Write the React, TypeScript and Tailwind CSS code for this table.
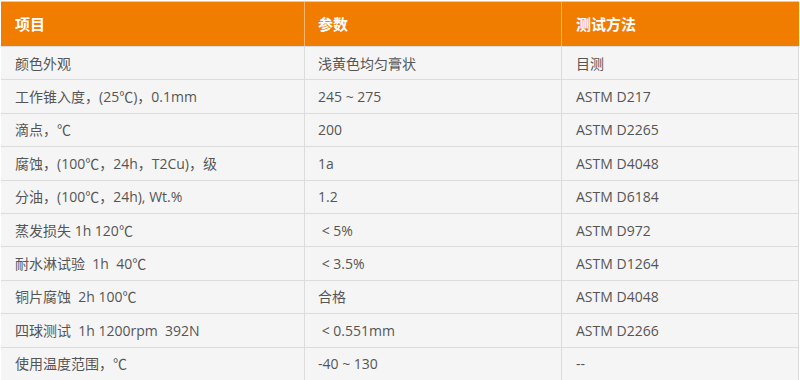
import React from "react";

const rows: [string, string, string][] = [
  ["颜色外观", "浅黄色均匀膏状", "目测"],
  ["工作锥入度，(25℃)，0.1mm", "245 ~ 275", "ASTM D217"],
  ["滴点，℃", "200", "ASTM D2265"],
  ["腐蚀，(100℃，24h，T2Cu)，级", "1a", "ASTM D4048"],
  ["分油，(100℃，24h), Wt.%", "1.2", "ASTM D6184"],
  ["蒸发损失 1h 120℃", " < 5%", "ASTM D972"],
  ["耐水淋试验  1h  40℃", " < 3.5%", "ASTM D1264"],
  ["铜片腐蚀  2h 100℃", "合格", "ASTM D4048"],
  ["四球测试  1h 1200rpm  392N", " < 0.551mm", "ASTM D2266"],
  ["使用温度范围，℃", "-40 ~ 130", "--"],
];

export default function App() {
  return (
    <div
      className="w-[800px] h-[380px] overflow-hidden bg-white pl-px pt-px"
      style={{ fontFamily: '"Open Sans", "Noto Sans CJK SC", sans-serif' }}
    >
      <div className="w-[798px] border-t border-[#e8c9a0]">
        <div className="grid grid-cols-[304px_257px_237px] h-[44px] bg-[#f07c00] text-white font-bold text-[15px]">
          <div className="flex items-center pl-[14px] border-r border-[#f5b56e]">项目</div>
          <div className="flex items-center pl-[13px] border-r border-[#f5b56e]">参数</div>
          <div className="flex items-center pl-[14px]">测试方法</div>
        </div>
        {rows.map((r, i) => (
          <div
            key={i}
            className="grid grid-cols-[304px_257px_237px] h-[33.4px] bg-[#f5f5f5] text-[#555] text-[14px] border-t border-[#dcdcdc] border-r"
          >
            <div className="flex items-center pl-[14px] border-r border-[#dcdcdc] whitespace-pre">{r[0]}</div>
            <div className="flex items-center pl-[13px] border-r border-[#dcdcdc] whitespace-pre">{r[1]}</div>
            <div className="flex items-center pl-[14px] whitespace-pre">{r[2]}</div>
          </div>
        ))}
      </div>
    </div>
  );
}
